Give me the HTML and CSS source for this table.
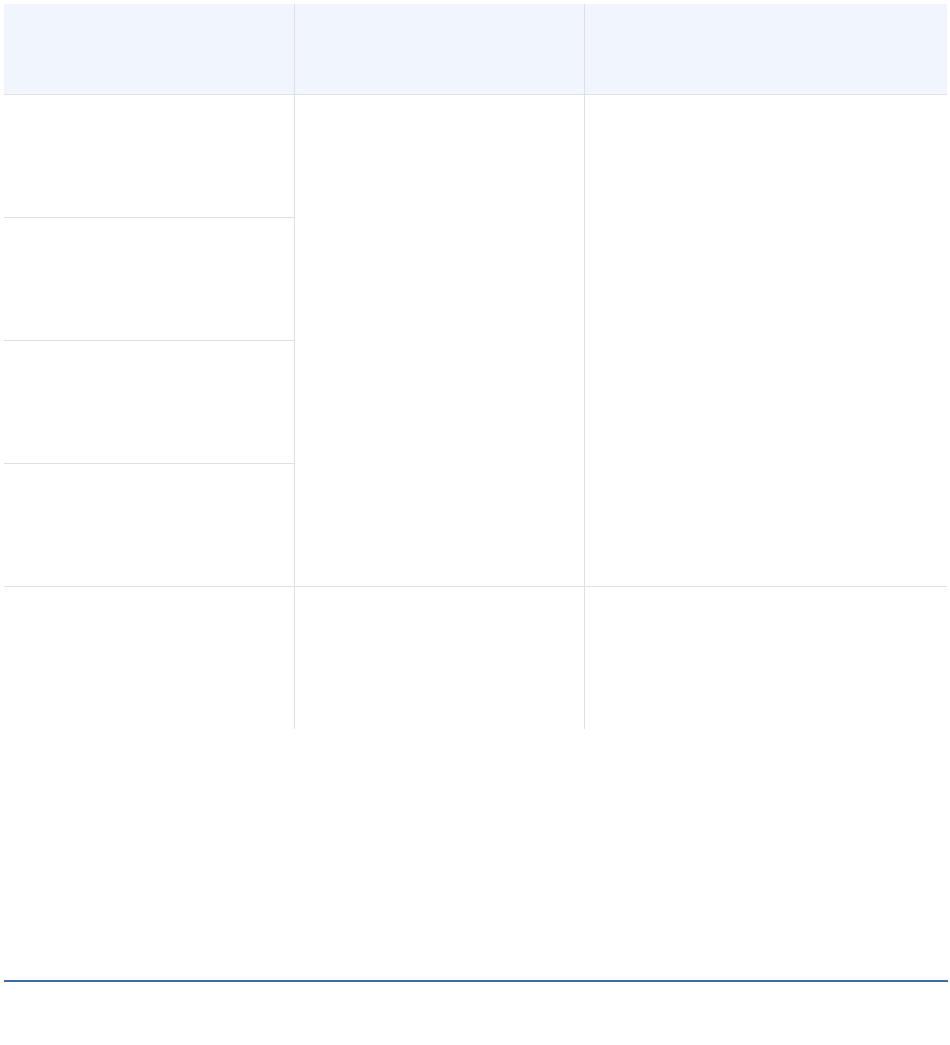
FILE: index.html
```html
<!DOCTYPE html>
<html>
<head>
<meta charset="utf-8">
<link rel="stylesheet" href="styles.css">
</head>
<body>
<div class="page">
  <div class="table">
    <div class="cell head c1"></div>
    <div class="cell head c2"></div>
    <div class="cell head c3"></div>

    <div class="cell row c1"></div>
    <div class="cell span c2"></div>
    <div class="cell span c3"></div>
    <div class="cell row c1"></div>
    <div class="cell row c1"></div>
    <div class="cell row c1"></div>

    <div class="cell last c1"></div>
    <div class="cell last c2"></div>
    <div class="cell last c3"></div>
  </div>
  <div class="rule"></div>
</div>
</body>
</html>
```
FILE: styles.css
```css
html, body {
  margin: 0;
  padding: 0;
  background: #ffffff;
  font-family: "Liberation Sans", Arial, sans-serif;
}

.page {
  padding: 4px 3px 0 4px;
}

.table {
  display: grid;
  grid-template-columns: 291px 290px 362px;
  grid-template-rows: 91px 123px 123px 123px 123px 142px;
}

.cell {
  box-sizing: border-box;
}

.c1, .c2 {
  border-right: 1px solid #e2e0dd;
}

.head {
  background: #f1f6fe;
  border-bottom: 1px solid #e4e0e0;
}

.row {
  grid-column: 1;
  border-bottom: 1px solid #e2e0dd;
}

.span {
  grid-row: 2 / span 4;
  border-bottom: 1px solid #e2e0dd;
}

.span.c2 { grid-column: 2; }
.span.c3 { grid-column: 3; }

.last {
  grid-row: 6;
}

.rule {
  margin-top: 251px;
  width: 944px;
  height: 2px;
  background: #3f6aa6;
}
```
